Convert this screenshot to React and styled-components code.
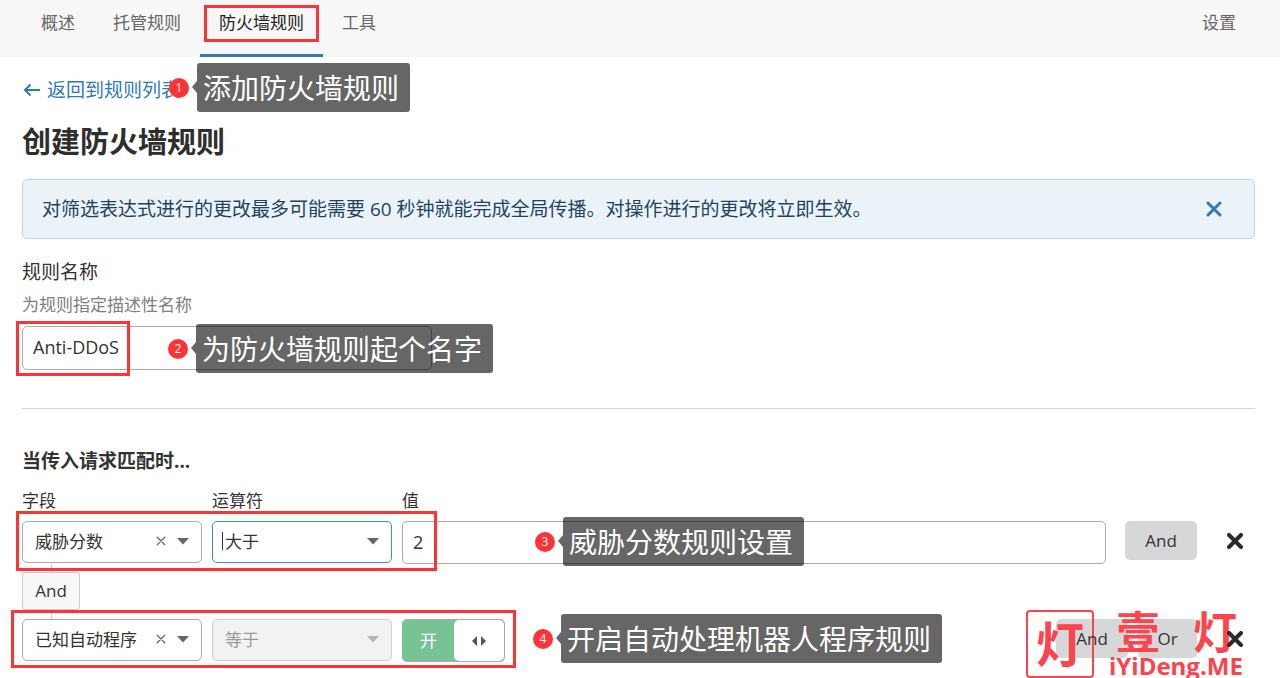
import React, { useState } from "react";
import styled, { createGlobalStyle, css } from "styled-components";

const GlobalStyle = createGlobalStyle`
  *, *::before, *::after { box-sizing: border-box; }
  body {
    margin: 0;
    background: #fff;
    color: #333;
    font-family: "Open Sans", "Noto Sans CJK SC", sans-serif;
    font-size: 17px;
    line-height: 24px;
  }
  button, input, select { font: inherit; color: inherit; margin: 0; }
`;

const red = "#fe3237";

const Nav = styled.nav`
  display: flex;
  height: 57px;
  padding: 0 25px 0 22px;
  background: #f7f7f8;
`;

const Tab = styled.a`
  position: relative;
  padding: 11px 19px 0;
  color: ${(p) => (p.$active ? "#222" : "#666")};
  text-decoration: none;
  white-space: nowrap;
  border-bottom: 3px solid ${(p) => (p.$active ? "#2f7bb5" : "transparent")};
  margin-left: ${(p) => (p.$end ? "auto" : "0")};
`;

/* Red frame drawn over the part of the page that a step talks about. */
const Frame = styled.span`
  position: absolute;
  z-index: 3;
  top: ${(p) => p.$top}px;
  left: ${(p) => p.$left}px;
  width: ${(p) => p.$width}px;
  height: ${(p) => p.$height}px;
  border: 3px solid ${red};
  pointer-events: none;
`;

const CalloutBox = styled.div`
  position: absolute;
  z-index: 4;
  top: ${(p) => p.$top}px;
  left: ${(p) => p.$left}px;
  display: flex;
  align-items: center;
  gap: 8px;
  pointer-events: none;
`;

const Badge = styled.span`
  width: 20px;
  height: 20px;
  border-radius: 50%;
  background: ${red};
  color: #fff;
  font-size: 12px;
  line-height: 20px;
  text-align: center;
`;

const Bubble = styled.span`
  position: relative;
  height: 49px;
  padding: 0 11px 0 6px;
  border-radius: 3px;
  background: rgba(0, 0, 0, 0.6);
  color: #fff;
  font-size: 28px;
  line-height: 50px;
  white-space: nowrap;

  &::before {
    content: "";
    position: absolute;
    top: 18px;
    left: -5px;
    border: solid transparent;
    border-width: 6px 5px 6px 0;
    border-right-color: rgba(0, 0, 0, 0.6);
  }
`;

const Main = styled.main`
  padding: 21px 25px 16px 22px;
`;

const BackRow = styled.div`
  position: relative;
`;

const BackLink = styled.a`
  display: flex;
  width: max-content;
  align-items: center;
  gap: 6px;
  color: #2f7bb5;
  font-size: 19px;
  line-height: 24px;
  text-decoration: none;
`;

const Title = styled.h1`
  margin: 20px 0 17px;
  font-size: 29px;
  line-height: 40px;
  font-weight: 700;
  color: #2e2e2e;
`;

const Alert = styled.div`
  display: flex;
  align-items: center;
  justify-content: space-between;
  min-height: 60px;
  padding: 0 32px 0 19px;
  border: 1px solid #b5d8ee;
  border-radius: 5px;
  background: #ebf3f9;
  color: #1f435c;
  font-size: 19px;
`;

const IconButton = styled.button`
  display: inline-flex;
  align-items: center;
  justify-content: center;
  width: ${(p) => p.$size}px;
  height: ${(p) => p.$size}px;
  padding: 0;
  border: 0;
  background: none;
  color: ${(p) => p.$color};
  cursor: pointer;
`;

const NameSection = styled.section`
  display: flex;
  flex-direction: column;
  padding: 21px 0 38px;
  border-bottom: 1px solid #d5d5d5;
`;

const NameLabel = styled.label`
  font-size: 19px;
`;

const Hint = styled.span`
  margin: 9px 0;
  color: #808080;
`;

const field = css`
  height: ${(p) => p.$height || 42}px;
  border: 1px solid #aaa;
  border-radius: 5px;
  background: #fff;
  outline: none;
`;

const TextInput = styled.input`
  ${field}
  width: 100%;
  padding: 0 10px 2px;
  font-size: 18px;
`;

const NameField = styled.div`
  position: relative;
  max-width: 410px;
`;

const Heading = styled.h2`
  margin: 38px 0 14px;
  font-size: 19px;
  line-height: 28px;
  font-weight: 700;
`;

const Columns = styled.div`
  position: relative;
  display: grid;
  grid-template-columns: 180px 180px minmax(0, 1fr) auto;
  column-gap: 10px;
  align-items: start;
`;

const HeaderRow = styled(Columns)`
  margin-bottom: 8px;
`;

const SelectWrap = styled.div`
  position: relative;
`;

const Select = styled.select`
  ${field}
  appearance: none;
  display: block;
  width: 100%;
  padding: 0 50px 0 12px;
  border-color: ${(p) => (p.$focused ? "#3f8fcb" : "#aaa")};

  &:disabled {
    opacity: 1;
    border-color: #cfcfcf;
    background: #f2f2f2;
    color: #999;
  }
`;

const Caret = styled.span`
  position: absolute;
  top: 11px;
  left: 10px;
  width: 1px;
  height: 18px;
  background: #333;
`;

const SelectIcons = styled.span`
  position: absolute;
  top: 12px;
  right: 13px;
  display: flex;
  align-items: center;
  gap: 8px;
  height: 16px;
  color: ${(p) => (p.$muted ? "#b5b5b5" : "#666")};
  pointer-events: none;
`;

const Actions = styled.div`
  position: relative;
  display: flex;
  align-items: flex-start;
  gap: 10px;
  padding: 0 12px 0 9px;
`;

const ActionButton = styled.button`
  height: 39px;
  min-width: ${(p) => p.$width}px;
  padding: 0;
  border: 0;
  border-radius: 5px;
  background: #d5d7d8;
`;

const OverMark = styled.span`
  position: relative;
  z-index: 2;
  display: inline-flex;
  height: 39px;
  align-items: center;
`;

const Remove = styled(OverMark)`
  margin-left: 20px;
`;

const Joiner = styled.div`
  display: flex;
  flex-direction: column;
  align-items: center;
  width: 58px;

  &::before, &::after {
    content: "";
    width: 1px;
    height: 8px;
    background: #ccc;
  }
  &::after { height: 9px; }
`;

const JoinerTag = styled.span`
  width: 100%;
  height: 38px;
  border: 1px solid #ccc;
  border-radius: 3px;
  background: #f7f7f7;
  line-height: 36px;
  text-align: center;
`;

const Switch = styled.label`
  position: relative;
  display: flex;
  width: 103px;
  height: 43px;
  border: 1px solid #aaa;
  border-left-color: #77c396;
  border-radius: 5px;
  background: #77c396;
  overflow: hidden;
  cursor: pointer;

  input { position: absolute; opacity: 0; }
`;

const SwitchText = styled.span`
  flex: 1;
  color: #fff;
  line-height: 42px;
  text-align: center;
`;

const Knob = styled.span`
  display: flex;
  align-items: center;
  justify-content: center;
  width: 50px;
  border-radius: 5px;
  background: #fff;
`;

const Mark = styled.div`
  position: absolute;
  z-index: 1;
  top: -9px;
  right: 10px;
  display: flex;
  gap: 15px;
  color: #fb444b;
  pointer-events: none;
`;

const Seal = styled.span`
  width: 68px;
  height: 68px;
  border: 2px solid;
  border-radius: 4px;
  font-size: 48px;
  line-height: 64px;
  font-weight: 700;
  text-align: center;
`;

const MarkWords = styled.span`
  display: flex;
  flex-direction: column;
  align-items: stretch;
  width: 136px;
`;

const MarkName = styled.span`
  display: flex;
  justify-content: space-between;
  padding: 0 8px 0 7px;
  font-size: 44px;
  line-height: 44px;
  font-weight: 700;
`;

const MarkSite = styled.span`
  font-size: 24px;
  line-height: 24px;
  font-weight: 700;
`;

function Cross({ size, stroke }) {
  return (
    <svg width={size} height={size} viewBox="0 0 16 16" fill="none" stroke="currentColor" strokeWidth={stroke} strokeLinecap="round" aria-hidden="true">
      <path d="M2 2 14 14M14 2 2 14" />
    </svg>
  );
}

function Triangle() {
  return (
    <svg width="12" height="7" viewBox="0 0 12 7" fill="currentColor" aria-hidden="true">
      <path d="M0 0h12L6 6.5z" />
    </svg>
  );
}

function Callout({ number, top, left, children }) {
  return (
    <CalloutBox $top={top} $left={left}>
      <Badge>{number}</Badge>
      <Bubble>{children}</Bubble>
    </CalloutBox>
  );
}

function Picker({ id, label, value, clearable, focused, disabled }) {
  return (
    <SelectWrap>
      <Select id={id} aria-label={label} $focused={focused} disabled={disabled} defaultValue={value}>
        <option>{value}</option>
      </Select>
      {focused && <Caret />}
      <SelectIcons $muted={disabled}>
        {clearable && (
          <IconButton type="button" $size={16} $color="#666" aria-label="清除">
            <Cross size={10} stroke={2} />
          </IconButton>
        )}
        <Triangle />
      </SelectIcons>
    </SelectWrap>
  );
}

function RemoveButton() {
  return (
    <Remove>
      <IconButton type="button" $size={16} $color="#2b2b2b" aria-label="移除">
        <Cross size={16} stroke={4} />
      </IconButton>
    </Remove>
  );
}

export default function App() {
  const [name, setName] = useState("Anti-DDoS");
  const [score, setScore] = useState("2");
  const [bot, setBot] = useState(true);

  return (
    <>
      <GlobalStyle />
      <Nav>
        <Tab href="#overview">概述</Tab>
        <Tab href="#managed">托管规则</Tab>
        <Tab href="#firewall" $active>
          防火墙规则
          <Frame $top={5} $left={4} $width={115} $height={37} />
        </Tab>
        <Tab href="#tools">工具</Tab>
        <Tab href="#settings" $end>设置</Tab>
      </Nav>
      <Main>
        <BackRow>
          <BackLink href="#rules">
            <svg width="19" height="14" viewBox="0 0 19 14" fill="none" stroke="currentColor" strokeWidth="2" aria-hidden="true">
              <path d="M18 7H3M8.500 1.500 3 7l5.500 5.500" />
            </svg>
            返回到规则列表
          </BackLink>
          <Callout number={1} top={-15} left={147}>添加防火墙规则</Callout>
        </BackRow>
        <Title>创建防火墙规则</Title>
        <Alert role="status">
          <span>对筛选表达式进行的更改最多可能需要 60 秒钟就能完成全局传播。对操作进行的更改将立即生效。</span>
          <IconButton type="button" $size={16} $color="#2f7bb5" aria-label="关闭">
            <Cross size={16} stroke={3} />
          </IconButton>
        </Alert>

        <NameSection>
          <NameLabel htmlFor="rule-name">规则名称</NameLabel>
          <Hint id="rule-hint">为规则指定描述性名称</Hint>
          <NameField>
            <TextInput id="rule-name" aria-describedby="rule-hint" $height={44} value={name} onChange={(e) => setName(e.target.value)} />
            <Frame $top={-5} $left={-6} $width={114} $height={55} />
            <Callout number={2} top={-2} left={146}>为防火墙规则起个名字</Callout>
          </NameField>
        </NameSection>

        <Heading>当传入请求匹配时...</Heading>
        <HeaderRow>
          <label htmlFor="field-1">字段</label>
          <label htmlFor="operator-1">运算符</label>
          <label htmlFor="value-1">值</label>
        </HeaderRow>

        <Columns>
          <Picker id="field-1" value="威胁分数" clearable />
          <Picker id="operator-1" value="大于" focused />
          <TextInput id="value-1" $height={43} value={score} onChange={(e) => setScore(e.target.value)} />
          <Actions>
            <ActionButton type="button" $width={72}>And</ActionButton>
            <RemoveButton />
          </Actions>
          <Frame $top={-10} $left={-6} $width={421} $height={60} />
          <Callout number={3} top={-4} left={513}>威胁分数规则设置</Callout>
        </Columns>

        <Joiner>
          <JoinerTag>And</JoinerTag>
        </Joiner>

        <Columns>
          <Picker id="field-2" label="字段" value="已知自动程序" clearable />
          <Picker id="operator-2" label="运算符" value="等于" disabled />
          <Switch>
            <input type="checkbox" role="switch" aria-label="值" checked={bot} onChange={(e) => setBot(e.target.checked)} />
            <SwitchText>{bot ? "开" : "关"}</SwitchText>
            <Knob>
              <svg width="16" height="10" viewBox="0 0 16 10" fill="#555" aria-hidden="true">
                <path d="M6 0v10L1 5zM10 0v10l5-5z" />
              </svg>
            </Knob>
          </Switch>
          <Actions>
            <ActionButton type="button" $width={72}><OverMark>And</OverMark></ActionButton>
            <ActionButton type="button" $width={59}><OverMark>Or</OverMark></ActionButton>
            <RemoveButton />
            <Mark>
              <Seal>灯</Seal>
              <MarkWords>
                <MarkName><span>壹</span><span>灯</span></MarkName>
                <MarkSite>iYiDeng.ME</MarkSite>
              </MarkWords>
            </Mark>
          </Actions>
          <Frame $top={-9} $left={-11} $width={505} $height={58} />
          <Callout number={4} top={-5} left={511}>开启自动处理机器人程序规则</Callout>
        </Columns>
      </Main>
    </>
  );
}
